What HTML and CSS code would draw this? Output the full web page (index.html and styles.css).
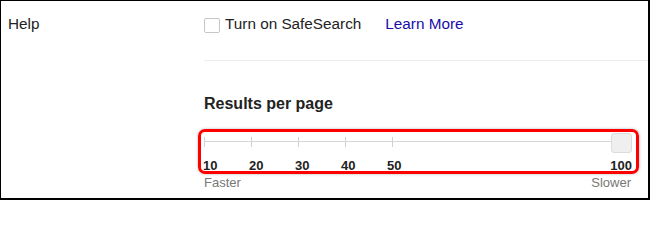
FILE: index.html
```html
<!DOCTYPE html>
<html>
<head>
<meta charset="utf-8">
<link rel="stylesheet" href="styles.css">
</head>
<body>
<div class="frame">
  <div class="label">Help</div>
  <div class="content">
    <div class="safe-row">
      <span class="checkbox"></span>
      <span class="safe-text">Turn on SafeSearch</span>
      <a class="learn" href="#">Learn More</a>
    </div>
    <div class="divider"></div>
    <div class="heading">Results per page</div>
    <div class="highlight">
      <div class="track-area">
        <div class="track"></div>
        <div class="ticks">
          <span class="tick"></span><span class="tick"></span><span class="tick"></span><span class="tick"></span><span class="tick"></span>
        </div>
        <div class="handle"></div>
      </div>
      <div class="labels">
        <span class="num">10</span><span class="num">20</span><span class="num">30</span><span class="num">40</span><span class="num">50</span><span class="num last">100</span>
      </div>
    </div>
    <div class="speed">
      <span>Faster</span>
      <span>Slower</span>
    </div>
  </div>
</div>
</body>
</html>
```

FILE: styles.css
```css
* { box-sizing: border-box; }
html, body { margin: 0; padding: 0; background: #fff; }
body {
  font-family: "Liberation Sans", Arial, sans-serif;
  color: #222;
}
.frame {
  width: 650px;
  height: 200px;
  border-style: solid;
  border-color: #000;
  border-width: 1px 2px 2px 1px;
  padding: 14px 0 0 7px;
  display: grid;
  grid-template-columns: 196px 1fr;
  overflow: hidden;
}
.label {
  font-size: 15.3px;
  line-height: 17px;
}
.content {
  display: flex;
  flex-direction: column;
}
.safe-row {
  display: flex;
  align-items: flex-start;
  font-size: 15.3px;
  line-height: 17px;
  height: 17px;
}
.checkbox {
  width: 16px;
  height: 15px;
  margin-top: 3px;
  border: 1px solid #c6c6c6;
  border-radius: 2px;
  background: #fff;
}
.safe-text { margin-left: 5px; }
.learn {
  margin-left: 24px;
  color: #1a0dab;
  text-decoration: none;
}
.divider {
  margin-top: 28px;
  height: 1px;
  background: #ebebeb;
}
.heading {
  margin-top: 34px;
  font-size: 16px;
  font-weight: bold;
  line-height: 18px;
  height: 18px;
}
.highlight {
  margin-top: 16px;
  margin-left: -6px;
  width: 441px;
  height: 45px;
  border: 3px solid #f00;
  border-radius: 7px;
  padding: 0 3px;
  box-shadow: 0 0 3px rgba(0,0,0,0.3);
}
.track-area {
  position: relative;
  height: 27px;
}
.track {
  position: absolute;
  left: 0;
  right: 6px;
  top: 9px;
  height: 1px;
  background: #d8d8d8;
}
.ticks {
  display: flex;
  gap: 46px;
  padding-top: 5px;
}
.tick {
  width: 1px;
  height: 10px;
  background: #d0d0d0;
}
.handle {
  position: absolute;
  right: 1px;
  top: 1px;
  width: 21px;
  height: 20px;
  background: #efefef;
  border: 1px solid #dcdcdc;
  border-radius: 3px;
}
.labels {
  display: flex;
  font-size: 13px;
  font-weight: bold;
  line-height: 13px;
  height: 12px;
  margin-left: -1px;
}
.num { width: 46px; }
.num.last {
  width: auto;
  margin-left: auto;
  margin-right: 1px;
}
.speed {
  margin-top: 1px;
  width: 427px;
  display: flex;
  justify-content: space-between;
  font-size: 13px;
  line-height: 15px;
  color: #777;
}
```
